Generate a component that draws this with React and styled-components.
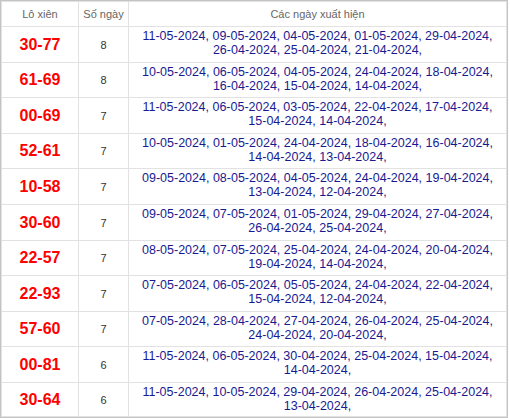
import React from "react";
import styled, { createGlobalStyle } from "styled-components";

// row heights picked so the lines land where the reference has them
const rows = [
  ["30-77", 8, 36, "11-05-2024, 09-05-2024, 04-05-2024, 01-05-2024, 29-04-2024, 26-04-2024, 25-04-2024, 21-04-2024,"],
  ["61-69", 8, 35, "10-05-2024, 06-05-2024, 04-05-2024, 24-04-2024, 18-04-2024, 16-04-2024, 15-04-2024, 14-04-2024,"],
  ["00-69", 7, 36, "11-05-2024, 06-05-2024, 03-05-2024, 22-04-2024, 17-04-2024, 15-04-2024, 14-04-2024,"],
  ["52-61", 7, 35, "10-05-2024, 01-05-2024, 24-04-2024, 18-04-2024, 16-04-2024, 14-04-2024, 13-04-2024,"],
  ["10-58", 7, 36, "09-05-2024, 08-05-2024, 04-05-2024, 24-04-2024, 19-04-2024, 13-04-2024, 12-04-2024,"],
  ["30-60", 7, 36, "09-05-2024, 07-05-2024, 01-05-2024, 29-04-2024, 27-04-2024, 26-04-2024, 25-04-2024,"],
  ["22-57", 7, 35, "08-05-2024, 07-05-2024, 25-04-2024, 24-04-2024, 20-04-2024, 19-04-2024, 14-04-2024,"],
  ["22-93", 7, 36, "07-05-2024, 06-05-2024, 05-05-2024, 24-04-2024, 22-04-2024, 15-04-2024, 12-04-2024,"],
  ["57-60", 7, 35, "07-05-2024, 28-04-2024, 27-04-2024, 26-04-2024, 25-04-2024, 24-04-2024, 20-04-2024,"],
  ["00-81", 6, 36, "11-05-2024, 06-05-2024, 30-04-2024, 25-04-2024, 15-04-2024, 14-04-2024,"],
  ["30-64", 6, 34, "11-05-2024, 10-05-2024, 29-04-2024, 26-04-2024, 25-04-2024, 13-04-2024,"],
];

const GlobalStyle = createGlobalStyle`
  body {
    margin: 0;
    background: #fff;
    font-family: "Liberation Sans", Arial, sans-serif;
  }
`;

const App = () => {
  return (
    <>
      <GlobalStyle />
      <Frame>
        <Table>
          <colgroup>
            <PairCol />
            <CountCol />
            <col />
          </colgroup>
          <thead>
            <HeadRow>
              <HeadCell>Lô xiên</HeadCell>
              <HeadCell>Số ngày</HeadCell>
              <HeadCell>Các ngày xuất hiện</HeadCell>
            </HeadRow>
          </thead>
          <tbody>
            {rows.map(([pair, count, h, dates]) => (
              <Row key={pair} $h={h}>
                <Pair>{pair}</Pair>
                <Count>{count}</Count>
                <Dates>{dates}</Dates>
              </Row>
            ))}
          </tbody>
        </Table>
      </Frame>
    </>
  );
};

export default App;

const Frame = styled.div`
  width: 508px;
  border: 1px solid #c4c4c4;
  box-sizing: border-box;
`;

const Table = styled.table`
  width: 506px;
  border-collapse: collapse;
  table-layout: fixed;
`;

const PairCol = styled.col`
  width: 77px;
`;

const CountCol = styled.col`
  width: 50px;
`;

const HeadRow = styled.tr`
  height: 25px;
`;

const HeadCell = styled.th`
  border: 1px solid #e2e2e2;
  padding: 0;
  font-size: 11px;
  font-weight: normal;
  color: #666;
  text-align: center;
  vertical-align: middle;
`;

const Row = styled.tr`
  height: ${(p) => p.$h}px;
`;

const Pair = styled.td`
  border: 1px solid #e2e2e2;
  padding: 0;
  text-align: center;
  vertical-align: middle;
  font-size: 16px;
  font-weight: bold;
  color: #ff0000;
`;

const Count = styled.td`
  border: 1px solid #e2e2e2;
  padding: 0;
  text-align: center;
  vertical-align: middle;
  font-size: 11px;
  color: #333;
`;

const Dates = styled.td`
  border: 1px solid #e2e2e2;
  padding: 2px 4px 0;
  text-align: center;
  vertical-align: top;
  font-size: 12.5px;
  line-height: 14px;
  color: #191990;
`;
